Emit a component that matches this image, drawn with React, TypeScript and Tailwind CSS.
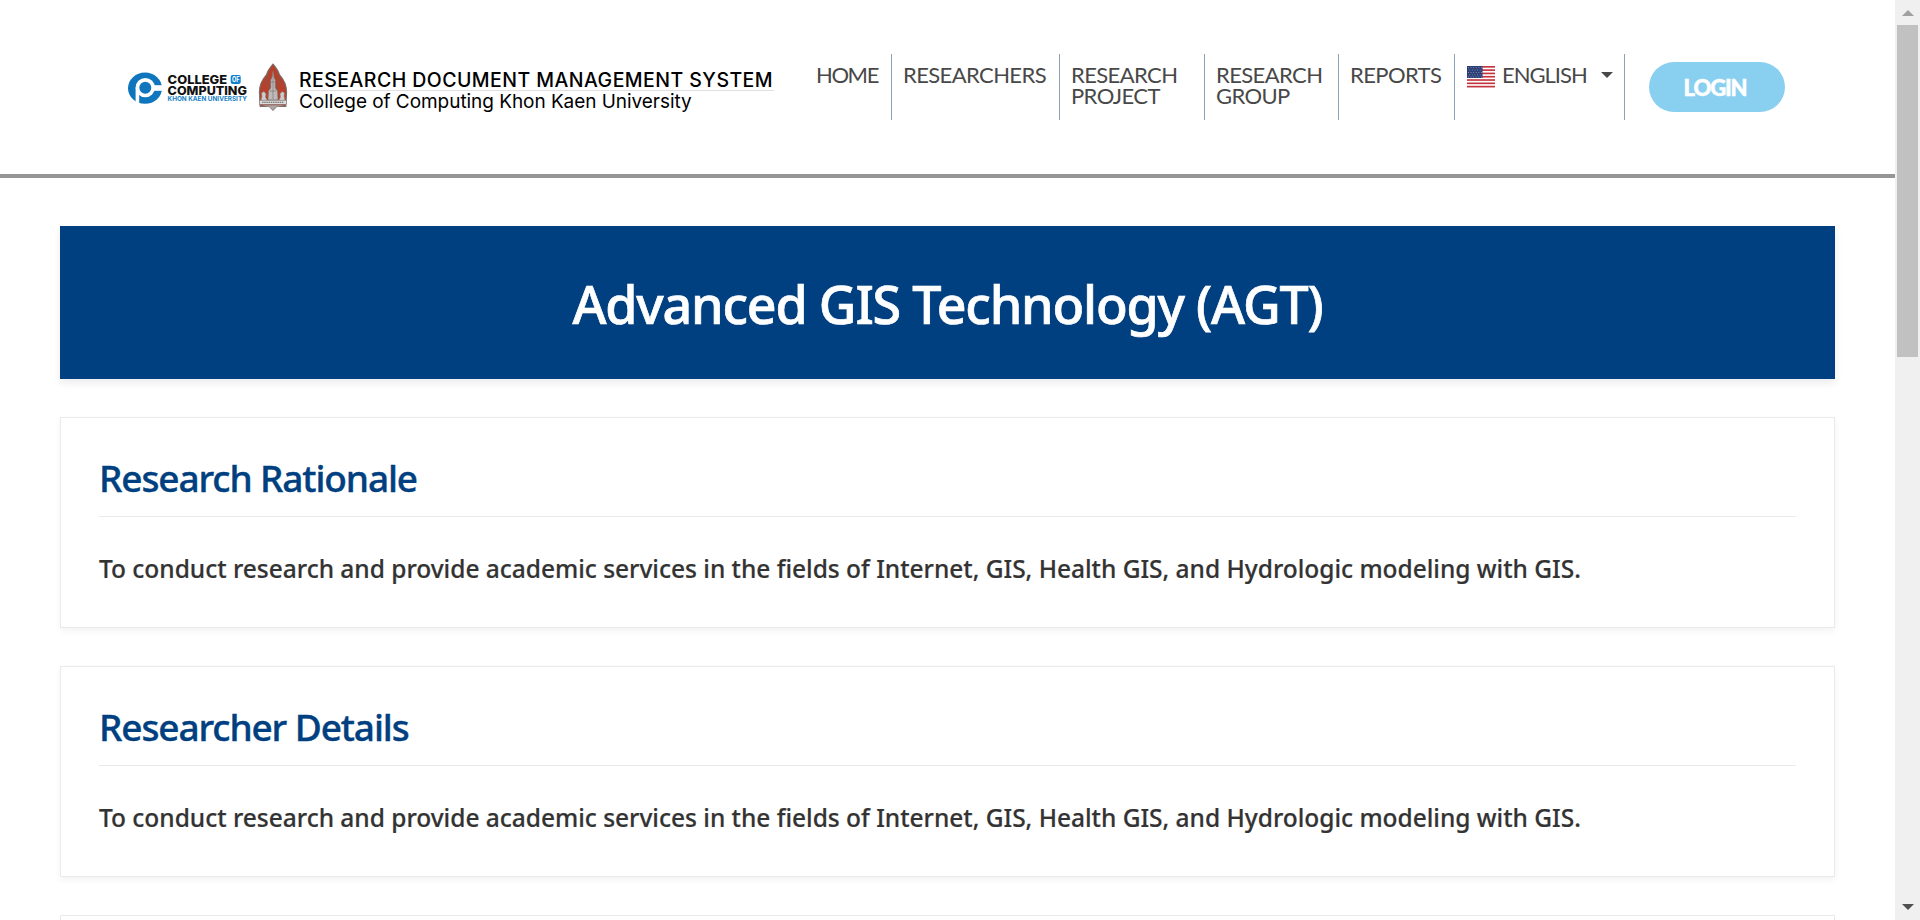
import type { ReactNode } from "react";

const stripes = [0, 1, 2, 3, 4, 5, 6];
const statement =
  "To conduct research and provide academic services in the fields of Internet, GIS, Health GIS, and Hydrologic modeling with GIS.";

function CollegeLogo() {
  return (
    <svg width="120" height="33" viewBox="0 0 120 33" className="mt-[72px] shrink-0" fontFamily="Inter, sans-serif">
      <ellipse cx="17" cy="16.2" rx="17" ry="15.6" fill="#0f75bd" />
      <circle cx="17.3" cy="15.6" r="9.7" fill="#fff" />
      <rect x="22" y="13.2" width="13" height="5.600" fill="#fff" />
      <rect x="7.6" y="15.6" width="3.600" height="17" fill="#fff" />
      <circle cx="17.3" cy="15.8" r="6" fill="#0f75bd" />
      <text x="39.6" y="11.8" fontSize="12" fontWeight="800" textLength="59.5" lengthAdjust="spacingAndGlyphs" fill="#111">COLLEGE</text>
      <rect x="102.700" y="3" width="10" height="9" rx="2" fill="#0f82cf" />
      <text x="104" y="10.2" fontSize="7" fontWeight="700" textLength="7.6" lengthAdjust="spacingAndGlyphs" fill="#fff">OF</text>
      <text x="39.6" y="22.6" fontSize="12" fontWeight="800" textLength="79.3" lengthAdjust="spacingAndGlyphs" fill="#111">COMPUTING</text>
      <text x="39.6" y="29.3" fontSize="6.6" fontWeight="700" textLength="79.3" lengthAdjust="spacingAndGlyphs" fill="#1580c8">KHON KAEN UNIVERSITY</text>
    </svg>
  );
}

function Emblem() {
  return (
    <svg width="30" height="48" viewBox="0 0 30 48" className="ml-2.5 mt-[63px] shrink-0">
      <path
        d="M15 1 C12 4.500 9.600 7.500 8.600 11.500 C4 16.500 1.400 22 1.400 29 L2.200 43.500 L11.500 43.500 L15 47.200 L18.500 43.500 L27.800 43.500 L28.600 29 C28.600 22 26 16.500 21.400 11.500 C20.400 7.500 18 4.500 15 1 Z"
        fill="#b5412c" stroke="#77716e" strokeWidth="1.1"
      />
      <path d="M8.600 12 C9 18 10 22 11.500 26 M21.400 12 C21 18 20 22 18.500 26" fill="none" stroke="#7c5a52" strokeWidth="0.9" />
      <path d="M15 8 L16.200 15 L17.300 17 L17.300 25 L19.500 28 L20 37 H10 L10.500 28 L12.700 25 V17 L13.800 15 Z" fill="#bdbab8" stroke="#77716e" strokeWidth="0.6" />
      <path d="M15 11 V36 M12.800 19 H17.200 M12 28 H18" stroke="#77716e" strokeWidth="0.6" />
      <path d="M3 38 L4 33 L3.500 30 L6 28.500 L8 31 L7.500 34 L9.500 38 Z M27 38 L26 33 L26.500 30 L24 28.500 L22 31 L22.500 34 L20.500 38 Z" fill="#cfcccb" stroke="#8b8785" strokeWidth="0.6" />
      <rect x="1.500" y="37.200" width="27" height="4.200" fill="#dedcdb" stroke="#77716e" strokeWidth="0.6" />
      <path d="M4 39.300 H26" stroke="#5d5957" strokeWidth="1.100" strokeDasharray="1.500 0.700" />
      <path d="M3 42.300 H27 L18.500 43.800 L15 47 L11.500 43.800 Z" fill="#aaa6a4" />
    </svg>
  );
}

function Flag() {
  return (
    <svg width="28" height="22" viewBox="0 0 28 22" className="mt-[12px] shrink-0">
      <rect width="28" height="21.500" fill="#fff" />
      {stripes.map((i) => (
        <rect key={i} y={i * 3.3} width="28" height="1.650" fill="#c4343f" />
      ))}
      <rect width="15.500" height="12" fill="#2b3e75" />
      {[1.7, 4.1, 6.5, 8.9, 11].map((y, i) => (
        <path key={y} d={`M${i % 2 ? 2.3 : 1} ${y} H15`} stroke="#a3accb" strokeWidth="0.8" strokeDasharray="0.9 1.700" />
      ))}
    </svg>
  );
}

function Item({ width, children }: { width: string; children: ReactNode }) {
  return (
    <li className={`${width} h-[66px] border-r border-[#8ba3b9] pl-[11px] pt-[10px]`}>{children}</li>
  );
}

function Card({ title }: { title: string }) {
  return (
    <section className="mt-[38px] h-[211px] border border-[#e9eaeb] bg-white px-[38px] pt-[36px] shadow-[0_3px_7px_rgba(0,0,0,0.05)]">
      <h2 className="h-[63px] border-b border-[#e9eaeb] text-[37px] font-medium leading-[48px] tracking-[-1.1px] text-[#003f80] [-webkit-text-stroke:0.4px]">{title}</h2>
      <p className="mt-[34px] whitespace-nowrap text-[24.5px] font-medium leading-[36px] tracking-[-0.015px] text-[#333] [-webkit-text-stroke:0.2px]">{statement}</p>
    </section>
  );
}

export default function App() {
  return (
    <div className="flex h-[920px] w-full overflow-hidden bg-white font-['Noto_Sans',sans-serif]">
      <div className="min-w-0 flex-1">
        <header className="flex h-[178px] items-start border-b-4 border-[#959595] pl-[128px]">
          <CollegeLogo />
          <Emblem />
          <div className="ml-[11px] mt-[68px] w-[475px] whitespace-nowrap font-['Inter',sans-serif] text-black">
            <div className="h-[23px] border-b border-[#e0e0e0] text-[19.5px] font-medium leading-[24px] tracking-[0.45px]">RESEARCH DOCUMENT MANAGEMENT SYSTEM</div>
            <div className="text-[19px] leading-[21px] tracking-[-0.05px]">College of Computing Khon Kaen University</div>
          </div>
          <ul className="ml-[31px] mt-[54px] flex font-['Lato',sans-serif] text-[22px] leading-[21px] tracking-[-0.6px] text-[#484848]">
            <Item width="w-[87px]"><span className="tracking-[-1.4px]">HOME</span></Item>
            <Item width="w-[168px]">RESEARCHERS</Item>
            <Item width="w-[145px]">RESEARCH<br />PROJECT</Item>
            <Item width="w-[134px]">RESEARCH<br />GROUP</Item>
            <Item width="w-[116px]">REPORTS</Item>
            <li className="flex h-[66px] w-[170px] items-start border-r border-[#8ba3b9] pl-3">
              <Flag />
              <span className="ml-[7px] mt-[10px] tracking-[-1px]">ENGLISH</span>
              <svg width="12" height="6" viewBox="0 0 12 6" className="ml-[14px] mt-[18px]"><path d="M0 0H12L6 6Z" fill="#484848" /></svg>
            </li>
          </ul>
          <button className="ml-6 mt-[62px] h-[50px] w-[136px] rounded-full bg-[#89cff0] pr-1 font-['Lato',sans-serif] text-[22px] font-black tracking-[-1.1px] text-white [-webkit-text-stroke:0.5px]">LOGIN</button>
        </header>
        <main className="mx-[60px] mt-12">
          <h1 className="h-[153px] bg-[#003f80] text-center text-[52px] font-medium leading-[156px] tracking-[-1.2px] text-white shadow-[0_4px_8px_rgba(0,0,0,0.08)] [-webkit-text-stroke:0.7px]">Advanced GIS Technology (AGT)</h1>
          <Card title="Research Rationale" />
          <Card title="Researcher Details" />
          <section className="mt-[38px] h-[211px] border border-[#e9eaeb] bg-white" />
        </main>
      </div>
      <div className="flex w-[25px] shrink-0 flex-col items-center bg-[#f0f0f0]">
        <svg width="12" height="6" viewBox="0 0 12 6" className="mt-[10px]"><path d="M0 6H12L6 0Z" fill="#a0a0a0" /></svg>
        <div className="mt-[9px] h-[332px] w-[21px] bg-[#c1c1c1]" />
        <svg width="12" height="6" viewBox="0 0 12 6" className="mb-[10px] mt-auto"><path d="M0 0H12L6 6Z" fill="#505050" /></svg>
      </div>
    </div>
  );
}
